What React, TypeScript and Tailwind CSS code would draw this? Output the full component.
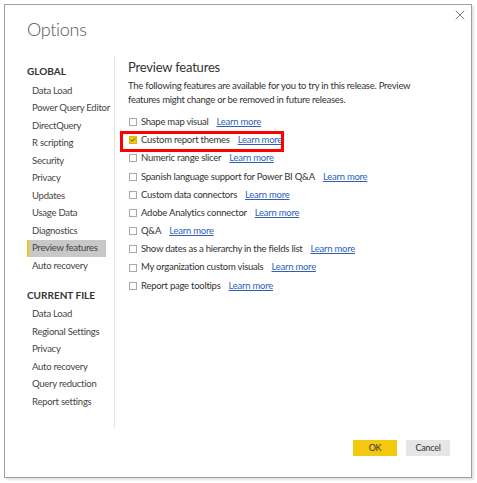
import { X, Check } from "lucide-react";

const globalItems = [
  "Data Load",
  "Power Query Editor",
  "DirectQuery",
  "R scripting",
  "Security",
  "Privacy",
  "Updates",
  "Usage Data",
  "Diagnostics",
  "Preview features",
  "Auto recovery",
];

const fileItems = [
  "Data Load",
  "Regional Settings",
  "Privacy",
  "Auto recovery",
  "Query reduction",
  "Report settings",
];

const features = [
  { label: "Shape map visual", checked: false },
  { label: "Custom report themes", checked: true },
  { label: "Numeric range slicer", checked: false },
  { label: "Spanish language support for Power BI Q&A", checked: false },
  { label: "Custom data connectors", checked: false },
  { label: "Adobe Analytics connector", checked: false },
  { label: "Q&A", checked: false },
  { label: "Show dates as a hierarchy in the fields list", checked: false },
  { label: "My organization custom visuals", checked: false },
  { label: "Report page tooltips", checked: false },
];

function NavItem({ label, active }: { label: string; active?: boolean }) {
  return (
    <div
      className={`h-[17.5px] flex items-center whitespace-nowrap ${
        active ? "bg-[#c8c8c8] border-l-2 border-[#f2c811] pl-[3px]" : "pl-[5px]"
      }`}
    >
      {label}
    </div>
  );
}

function FeatureRow({ label, checked, highlight }: { label: string; checked: boolean; highlight?: boolean }) {
  return (
    <div className="relative h-[18.2px] flex items-center whitespace-nowrap">
      <span
        className={`w-[8px] h-[8px] ml-[1px] flex items-center justify-center border ${
          checked ? "bg-[#f2c811] border-[#e0b800]" : "bg-white border-[#a8a8a8]"
        }`}
      >
        {checked && <Check className="w-[8px] h-[8px] text-[#333]" strokeWidth={3.5} />}
      </span>
      <span className="ml-[4px]">{label}</span>
      <a className="ml-[8px] text-[#2f5fb8] underline underline-offset-1 cursor-pointer">Learn more</a>
      {highlight && (
        <span className="absolute left-[-8px] top-0 w-[164px] h-[21px] border-[3px] border-[#ff0000]" />
      )}
    </div>
  );
}

export default function App() {
  return (
    <div
      className="w-[477px] h-[483px] bg-white pt-[4px] pl-[4px] text-[9.5px] tracking-[-0.25px] text-[#444]"
      style={{ fontFamily: 'Lato, "Noto Sans", sans-serif' }}
    >
      <div className="w-[468px] h-[474px] border border-[#9f9f9f] bg-white shadow-[2px_2px_2px_rgba(0,0,0,0.12)] flex flex-col">
        {/* Header */}
        <div className="h-[52px] flex items-start justify-between pl-[22px] pr-[3px]">
          <h1 className="mt-[12px] text-[18px] leading-[24px] tracking-[-0.3px] font-light text-[#555]">Options</h1>
          <button className="mt-[2px] text-[#777]">
            <X className="w-[16px] h-[16px]" strokeWidth={1.4} />
          </button>
        </div>

        {/* Body */}
        <div className="flex h-[371px]">
          <div className="w-[110px] pl-[22px] pr-[8px] border-r border-[#e3e3e3]">
            <div className="pt-[3px] h-[25px] flex items-center font-bold text-[10px] tracking-[0px] text-[#333]">GLOBAL</div>
            {globalItems.map((item) => (
              <NavItem key={item} label={item} active={item === "Preview features"} />
            ))}
            <div className="mt-[11px] h-[20px] flex items-center font-bold text-[10px] tracking-[0px] text-[#333]">CURRENT FILE</div>
            {fileItems.map((item) => (
              <NavItem key={item} label={item} />
            ))}
          </div>

          <div className="flex-1 pl-[13px] pr-[20px] text-[#333]">
            <h2 className="text-[13px] leading-[20px] tracking-[-0.2px] text-[#333]">Preview features</h2>
            <p className="leading-[14px] mt-[2px] mb-[6px] whitespace-nowrap">
              The following features are available for you to try in this release. Preview
              <br />
              features might change or be removed in future releases.
            </p>
            {features.map((f) => (
              <FeatureRow key={f.label} label={f.label} checked={f.checked} highlight={f.label === "Custom report themes"} />
            ))}
          </div>
        </div>

        {/* Footer */}
        <div className="flex-1 flex items-start justify-end gap-[9px] pr-[21px] pt-[12px]">
          <button className="w-[44px] h-[16px] bg-[#f2c811] text-[#333] text-[9px] leading-[16px]">OK</button>
          <button className="w-[44px] h-[16px] bg-[#e6e6e6] text-[#333] text-[9px] leading-[16px]">Cancel</button>
        </div>
      </div>
    </div>
  );
}
